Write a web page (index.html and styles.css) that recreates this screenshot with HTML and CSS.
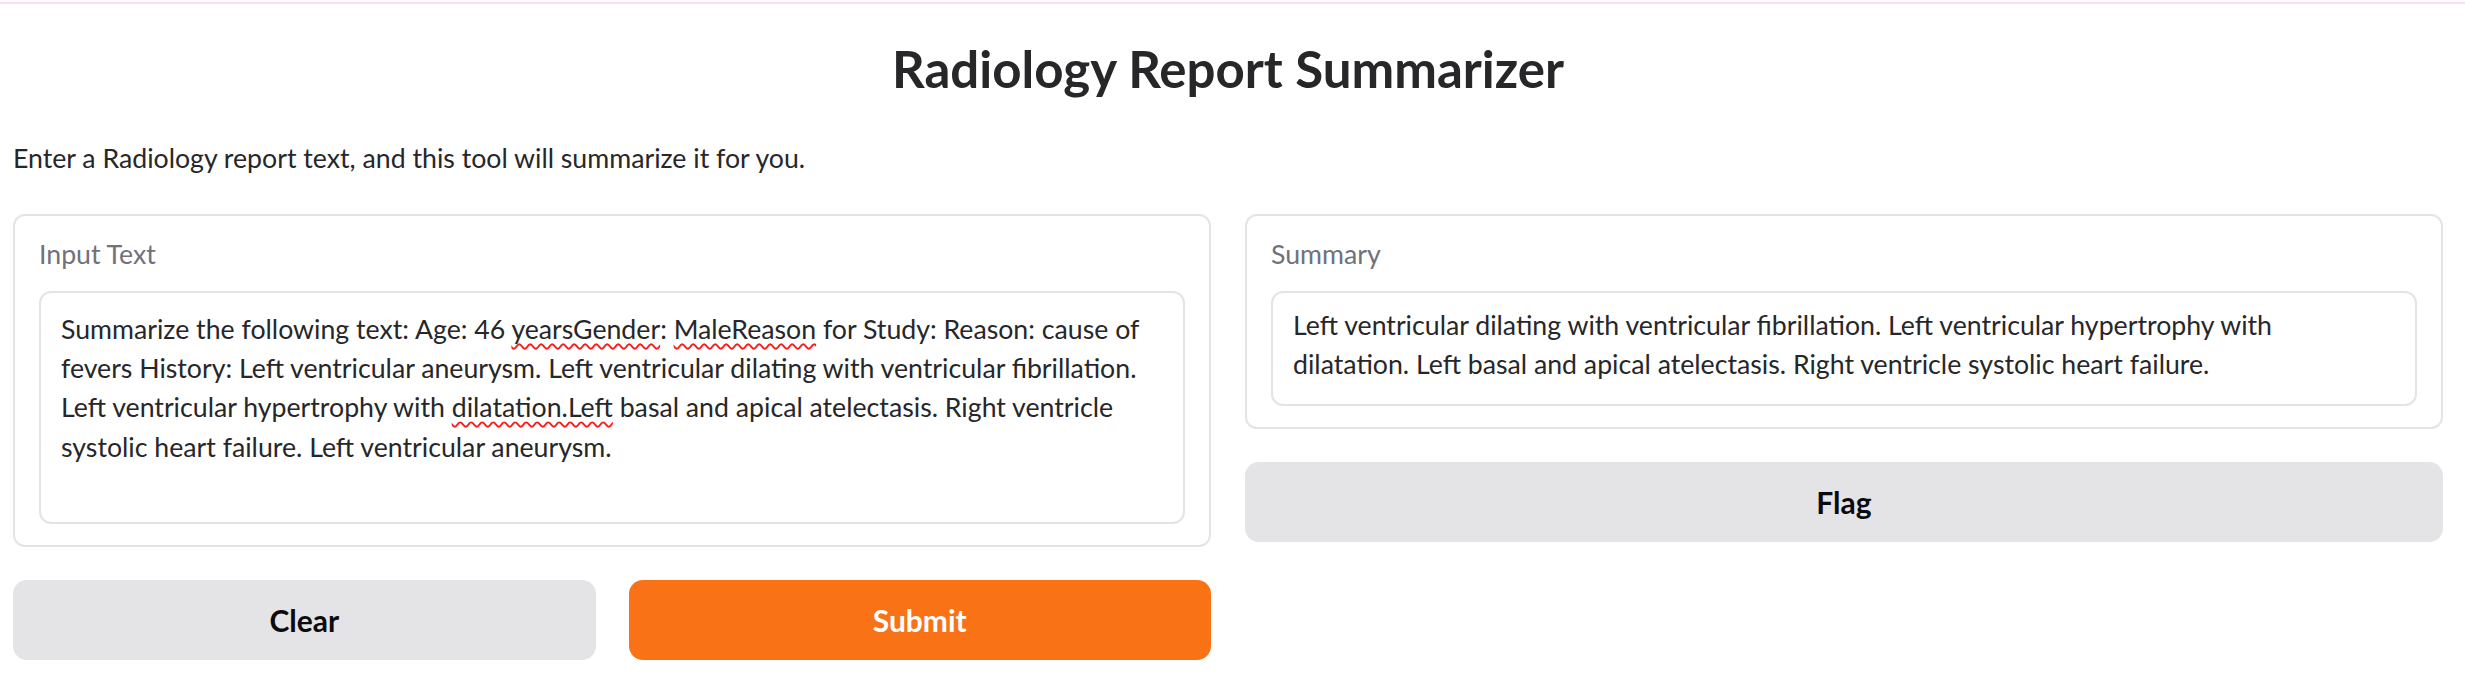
FILE: index.html
```html
<!DOCTYPE html>
<html lang="en">
<head>
<meta charset="utf-8">
<title>Radiology Report Summarizer</title>
<link rel="stylesheet" href="styles.css">
</head>
<body>
<div class="topline"></div>
<main class="app">
  <h1 class="title">Radiology Report Summarizer</h1>
  <p class="desc">Enter a Radiology report text, and this tool will summarize it for you.</p>
  <div class="cols">
    <div class="col">
      <div class="block">
        <span class="lbl">Input Text</span>
        <div class="field input-field">Summarize the following text: Age: 46 <span class="sp">yearsGender</span>: <span class="sp">MaleReason</span> for Study: Reason: cause of<br>fevers History: Left ventricular aneurysm. Left ventricular dilating with ventricular fibrillation.<br>Left ventricular hypertrophy with <span class="sp">dilatation.Left</span> basal and apical atelectasis. Right ventricle<br>systolic heart failure. Left ventricular aneurysm.</div>
      </div>
      <div class="btnrow">
        <button class="btn secondary">Clear</button>
        <button class="btn primary">Submit</button>
      </div>
    </div>
    <div class="col">
      <div class="block">
        <span class="lbl">Summary</span>
        <div class="field output-field">Left ventricular dilating with ventricular fibrillation. Left ventricular hypertrophy with<br>dilatation. Left basal and apical atelectasis. Right ventricle systolic heart failure.</div>
      </div>
      <button class="btn secondary">Flag</button>
    </div>
  </div>
</main>
</body>
</html>
```
FILE: styles.css
```css
* { box-sizing: border-box; }

html, body {
  margin: 0;
  padding: 0;
  background: #ffffff;
}

body {
  font-family: Lato, "Noto Sans", sans-serif;
  color: #27272a;
  font-size: 26.7px;
}

.topline {
  height: 2px;
  margin-top: 2px;
  background: #f9e1e5;
}

.app {
  padding: 0 22px 0 13px;
}

.title {
  margin: 36px 0 0;
  text-align: center;
  font-size: 51px;
  line-height: 58px;
  font-weight: 700;
  color: #27272a;
}

.desc {
  margin: 42px 0 0;
  font-size: 26.7px;
  line-height: 37px;
}

.cols {
  display: grid;
  grid-template-columns: 1fr 1fr;
  column-gap: 34px;
  margin-top: 37px;
  align-items: start;
}

.col {
  display: flex;
  flex-direction: column;
  gap: 33px;
}

.block {
  border: 2px solid #e4e4e7;
  border-radius: 12px;
  padding: 20px 24px 21px;
  background: #fff;
}

.lbl {
  display: block;
  font-size: 26.7px;
  line-height: 37px;
  color: #71717a;
  margin-bottom: 18px;
}

.field {
  border: 2px solid #e4e4e7;
  border-radius: 12px;
  font-size: 26.7px;
  line-height: 39.2px;
  color: #27272a;
  white-space: nowrap;
}

.input-field {
  height: 233px;
  padding: 17px 20px;
}

.output-field {
  padding: 13px 20px 20px;
}

.sp {
  text-decoration: underline wavy #ff1a1a;
  text-decoration-thickness: 1.5px;
  text-underline-offset: 4px;
  text-decoration-skip-ink: none;
}

.btnrow {
  display: grid;
  grid-template-columns: 1fr 1fr;
  column-gap: 33px;
}

.btn {
  height: 80px;
  border: none;
  border-radius: 14px;
  font-family: Lato, "Noto Sans", sans-serif;
  font-size: 30px;
  font-weight: 700;
  cursor: pointer;
}

.secondary {
  background: #e4e4e7;
  color: #0b0b0f;
}

.primary {
  background: #f97316;
  color: #ffffff;
}
```
